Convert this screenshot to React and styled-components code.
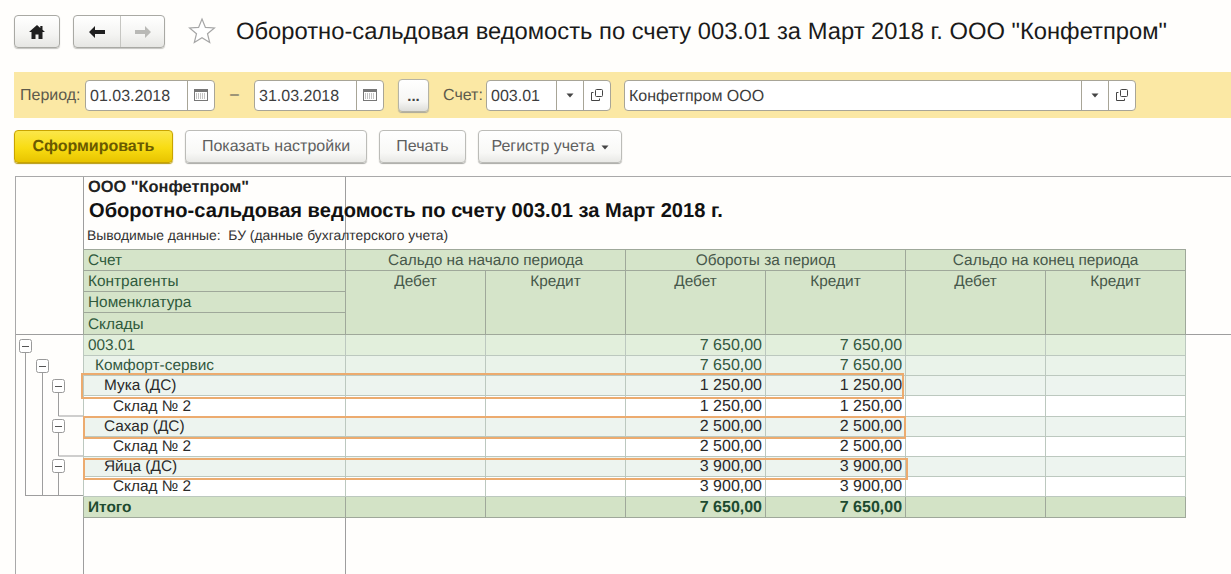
import React from "react";
import styled, { createGlobalStyle } from "styled-components";

const GlobalStyle = createGlobalStyle`
  html, body {
    margin: 0;
    padding: 0;
    background: #fffefc;
    font-family: "Liberation Sans", Arial, sans-serif;
    color: #2b2b2b;
    text-rendering: geometricPrecision;
  }
  body {
    height: 574px;
    overflow: hidden;
  }
`;

const Page = styled.div`
  display: flex;
  flex-direction: column;
  width: 1231px;
  height: 574px;
  overflow: hidden;
`;

const TopBar = styled.div`
  display: flex;
  align-items: flex-start;
  height: 57px;
  padding: 15px 0 0 14px;
`;

const NavGroup = styled.div`
  display: flex;
  height: 33px;
  margin-right: 13px;
  border: 1px solid #a9a9a4;
  border-radius: 4px;
  background: linear-gradient(#ffffff, #f4f4f2 60%, #e6e6e3);
  box-sizing: border-box;
  box-shadow: 0 1px 1px #c4c4c0;
`;

const NavButton = styled.div`
  display: flex;
  align-items: center;
  justify-content: center;
  width: ${(p) => p.$width}px;
  & + & {
    border-left: 1px solid #c6c6c2;
  }
`;

const StarWrap = styled.div`
  display: flex;
  margin: 2px 20px 0 10px;
`;

const PageTitle = styled.h1`
  margin: 2px 0 0;
  font-size: 23.75px;
  font-weight: 400;
  line-height: 30px;
  color: #1a1a1a;
  white-space: nowrap;
`;

const FilterBar = styled.div`
  display: flex;
  align-items: center;
  height: 46px;
  margin-left: 14px;
  padding-left: 6px;
  background: #fbe8a4;
`;

const FilterLabel = styled.span`
  width: ${(p) => p.$width}px;
  padding-top: 1px;
  font-size: 16px;
  color: #5d5a4c;
`;

const Dash = styled.span`
  width: 39px;
  text-align: center;
  font-size: 16px;
  color: #555;
`;

const Field = styled.div`
  display: flex;
  align-items: stretch;
  flex: none;
  width: ${(p) => p.$width}px;
  height: 31px;
  margin-right: ${(p) => p.$gap}px;
  border: 1px solid #a8a597;
  border-radius: 4px;
  background: #fff;
  box-sizing: border-box;
`;

const FieldText = styled.span`
  flex: 1;
  padding: 1px 0 0 4px;
  font-size: 16px;
  line-height: 29px;
  color: #3d3d3d;
`;

const FieldButton = styled.span`
  display: flex;
  align-items: center;
  justify-content: center;
  width: 26px;
  border-left: 1px solid #a8a597;
`;

const DotsButton = styled.div`
  flex: none;
  width: 31px;
  height: 33px;
  margin-right: 14px;
  border: 1px solid #b5b3a5;
  border-radius: 4px;
  background: linear-gradient(#ffffff, #f6f6f4 70%, #dededa);
  box-sizing: border-box;
  box-shadow: 0 1px 1px #aaa89c;
  text-align: center;
  font-size: 15px;
  font-weight: 700;
  line-height: 34px;
  color: #444;
`;

const ActionBar = styled.div`
  display: flex;
  gap: 12px;
  height: 33px;
  margin-top: 12px;
  padding-left: 14px;
`;

const ActionButton = styled.div`
  display: flex;
  align-items: center;
  justify-content: center;
  gap: 6px;
  width: ${(p) => p.$width}px;
  padding-top: 1px;
  border: 1px solid ${(p) => (p.$primary ? "#c9a400" : "#bcbcb8")};
  border-radius: 4px;
  background: ${(p) =>
    p.$primary
      ? "linear-gradient(#fbe74a, #f8dc12 55%, #e8c400)"
      : "linear-gradient(#ffffff, #f8f8f6 70%, #e9e9e6)"};
  box-sizing: border-box;
  box-shadow: 0 1px 1px ${(p) => (p.$primary ? "#b59a10" : "#a9a9a5")};
  font-size: 16px;
  font-weight: ${(p) => (p.$primary ? 700 : 400)};
  color: ${(p) => (p.$primary ? "#6a5a00" : "#5f5f5f")};
`;

const Sheet = styled.div`
  position: relative;
  display: flex;
  flex: 1;
  margin: 13px 0 0 15px;
  border-top: 1px solid #a9a9a9;
  border-left: 1px solid #a9a9a9;
  /* a rule that runs on past the table, under the header */
  background: linear-gradient(#9e9e9e, #9e9e9e) no-repeat 0 157px / 100% 1px;
`;

const Gutter = styled.div`
  flex: none;
  width: 67px;
  border-right: 1px solid #9e9e9e;
`;

const TreeLines = styled.svg`
  display: block;
  margin-top: 157px;
`;

const ReportArea = styled.div`
  flex: 1;
  background: linear-gradient(#9e9e9e, #9e9e9e) no-repeat 261px 0 / 1px 100%;
`;

const ReportHead = styled.div`
  height: 72px;
  padding-left: 4px;
  box-sizing: border-box;
`;

const Company = styled.div`
  padding-top: 2px;
  font-size: 16.4px;
  font-weight: 700;
  line-height: 17px;
  color: #222;
`;

const ReportTitle = styled.div`
  margin-top: 3px;
  padding-left: 1px;
  font-size: 20.1px;
  font-weight: 700;
  line-height: 24px;
  color: #111;
  white-space: nowrap;
`;

const ReportNote = styled.div`
  margin: 5px 0 0 -1px;
  font-size: 13.9px;
  line-height: 15px;
  color: #333;
  white-space: nowrap;
`;

const Table = styled.table`
  width: 1102px;
  margin-left: -1px;
  border-collapse: collapse;
  table-layout: fixed;
  font-size: 15.4px;
`;

const HeadCell = styled.td`
  height: ${(p) => p.$height || 20}px;
  padding: ${(p) => (p.$top ? 2 : 1)}px 3px 0 ${(p) => (p.$left ? 4 : 3)}px;
  border: 1px solid #9fa89a;
  background: #d5e4c9;
  box-sizing: border-box;
  color: ${(p) => (p.$left ? "#2f5a3c" : "#46574a")};
  line-height: 17px;
  text-align: ${(p) => (p.$left ? "left" : "center")};
  vertical-align: ${(p) => (p.$top ? "top" : "middle")};
  white-space: nowrap;
  overflow: hidden;
`;

const rowColors = {
  account: "#e2efdc",
  partner: "#eaf3ea",
  item: "#edf4ef",
  store: "#ffffff",
  total: "#d3e3c6",
};

const BodyCell = styled.td`
  height: ${(p) => p.$height}px;
  padding: 0 3px 0 ${(p) => p.$indent || 3}px;
  border: 1px solid ${(p) => (p.$kind === "total" ? "#9fa89a" : "#bcc8bf")};
  background: ${(p) => rowColors[p.$kind]};
  box-sizing: border-box;
  color: ${(p) => (p.$kind === "total" ? "#1d4a30" : p.$kind === "account" || p.$kind === "partner" ? "#33583f" : "#2a2a2a")};
  font-size: ${(p) => (p.$num ? "16px" : "inherit")};
  font-weight: ${(p) => (p.$kind === "total" ? 700 : 400)};
  line-height: 17px;
  text-align: ${(p) => (p.$num ? "right" : "left")};
  white-space: nowrap;
  overflow: hidden;
`;

const Highlight = styled.div`
  position: absolute;
  left: ${(p) => p.$left}px;
  top: ${(p) => p.$top}px;
  width: ${(p) => p.$width}px;
  height: ${(p) => p.$height}px;
  border: 2px solid #ecab6f;
  box-sizing: border-box;
  pointer-events: none;
`;

const HomeIcon = () => (
  <svg width="18" height="16" viewBox="0 0 18 16">
    <path d="M9 1 1 8h2.5v7h4v-4.5h3V15h4V8H17l-2.5-2.2V2h-2.2v1.900z" fill="#1f1f1f" />
  </svg>
);

const ArrowIcon = ({ color, flip }) => (
  <svg width="20" height="14" viewBox="0 0 20 14" style={flip ? { transform: "scaleX(-1)" } : undefined}>
    <path d="M8 1 2 7l6 6v-4h10V5H8z" fill={color} />
  </svg>
);

const StarIcon = () => (
  <svg width="28" height="28" viewBox="0 0 28 28">
    <path
      d="M14 2l3.400 8.400 9 .6-6.900 5.700 2.200 8.800L14 20.700l-7.700 4.800 2.200-8.800L1.600 11l9-.6z"
      fill="#fff"
      stroke="#a6a6a6"
      strokeWidth="1.2"
    />
  </svg>
);

const CalendarIcon = () => (
  <svg width="14" height="12" viewBox="0 0 14 12">
    <rect x="0.5" y="0.5" width="13" height="11" fill="#fff" stroke="#777" />
    <rect x="1" y="1" width="12" height="2" fill="#777" />
    <path d="M2 5h10M2 7h10M2 9h10" stroke="#888" strokeDasharray="1 1" />
  </svg>
);

const CaretIcon = () => (
  <svg width="8" height="5" viewBox="0 0 8 5">
    <path d="M0.5 0.5h7L4 4.500z" fill="#444" />
  </svg>
);

const OpenIcon = () => (
  <svg width="14" height="14" viewBox="0 0 14 14">
    <rect x="5.5" y="1.5" width="7" height="7" rx="1" fill="#fff" stroke="#444" />
    <path d="M3.5 4.500h-2v8h8v-2" fill="none" stroke="#444" />
  </svg>
);

const accounts = [
  { key: "root", kind: "account", label: "003.01", indent: 4, value: "7 650,00", height: 21 },
  { key: "partner", kind: "partner", label: "Комфорт-сервис", indent: 11, value: "7 650,00", height: 20 },
  { key: "flour", kind: "item", label: "Мука (ДС)", indent: 20, value: "1 250,00", height: 20 },
  { key: "flour-store", kind: "store", label: "Склад № 2", indent: 29, value: "1 250,00", height: 21 },
  { key: "sugar", kind: "item", label: "Сахар (ДС)", indent: 20, value: "2 500,00", height: 20 },
  { key: "sugar-store", kind: "store", label: "Склад № 2", indent: 29, value: "2 500,00", height: 20 },
  { key: "eggs", kind: "item", label: "Яйца (ДС)", indent: 20, value: "3 900,00", height: 20 },
  { key: "eggs-store", kind: "store", label: "Склад № 2", indent: 29, value: "3 900,00", height: 20 },
  { key: "total", kind: "total", label: "Итого", indent: 4, value: "7 650,00", height: 21 },
];

const treeBoxes = [
  [9, 12],
  [26, 32],
  [42, 52],
  [42, 92],
  [42, 132],
];

const Tree = () => (
  <TreeLines width="67" height="180" viewBox="0 0 67 180">
    <path
      d="M9.5 12v150M26.5 32v130M42.5 52v30H67M42.5 92v30H67M42.5 132v30M9 161.5h58"
      fill="none"
      stroke="#9e9e9e"
    />
    {treeBoxes.map(([x, y]) => (
      <g key={y}>
        <rect x={x - 5.5} y={y - 6.5} width="12" height="13" rx="2" fill="#fff" stroke="#9a9a9a" />
        <path d={`M${x - 3} ${y + 0.5}h7`} stroke="#555" />
      </g>
    ))}
  </TreeLines>
);

export default function App() {
  return (
    <Page>
      <GlobalStyle />
      <TopBar>
        <NavGroup>
          <NavButton $width={44}>
            <HomeIcon />
          </NavButton>
        </NavGroup>
        <NavGroup>
          <NavButton $width={46}>
            <ArrowIcon color="#1f1f1f" />
          </NavButton>
          <NavButton $width={43}>
            <ArrowIcon color="#b9b9b6" flip />
          </NavButton>
        </NavGroup>
        <StarWrap>
          <StarIcon />
        </StarWrap>
        <PageTitle>Оборотно-сальдовая ведомость по счету 003.01 за Март 2018 г. ООО "Конфетпром"</PageTitle>
      </TopBar>

      <FilterBar>
        <FilterLabel $width={65}>Период:</FilterLabel>
        <Field $width={130} $gap={0}>
          <FieldText>01.03.2018</FieldText>
          <FieldButton>
            <CalendarIcon />
          </FieldButton>
        </Field>
        <Dash>–</Dash>
        <Field $width={130} $gap={14}>
          <FieldText>31.03.2018</FieldText>
          <FieldButton>
            <CalendarIcon />
          </FieldButton>
        </Field>
        <DotsButton>...</DotsButton>
        <FilterLabel $width={43}>Счет:</FilterLabel>
        <Field $width={125} $gap={13}>
          <FieldText>003.01</FieldText>
          <FieldButton>
            <CaretIcon />
          </FieldButton>
          <FieldButton>
            <OpenIcon />
          </FieldButton>
        </Field>
        <Field $width={512} $gap={0}>
          <FieldText>Конфетпром ООО</FieldText>
          <FieldButton>
            <CaretIcon />
          </FieldButton>
          <FieldButton>
            <OpenIcon />
          </FieldButton>
        </Field>
      </FilterBar>

      <ActionBar>
        <ActionButton $primary $width={159}>Сформировать</ActionButton>
        <ActionButton $width={182}>Показать настройки</ActionButton>
        <ActionButton $width={87}>Печать</ActionButton>
        <ActionButton $width={144}>
          Регистр учета <CaretIcon />
        </ActionButton>
      </ActionBar>

      <Sheet>
        <Gutter>
          <Tree />
        </Gutter>
        <ReportArea>
          <ReportHead>
            <Company>ООО "Конфетпром"</Company>
            <ReportTitle>Оборотно-сальдовая ведомость по счету 003.01 за Март 2018 г.</ReportTitle>
            <ReportNote>Выводимые данные:&nbsp; БУ (данные бухгалтерского учета)</ReportNote>
          </ReportHead>
          <Table>
            <colgroup>
              <col width="262" />
              <col width="140" />
              <col width="140" />
              <col width="140" />
              <col width="140" />
              <col width="140" />
              <col width="140" />
            </colgroup>
            <tbody>
              <tr>
                <HeadCell $left $height={21}>Счет</HeadCell>
                <HeadCell colSpan={2}>Сальдо на начало периода</HeadCell>
                <HeadCell colSpan={2}>Обороты за период</HeadCell>
                <HeadCell colSpan={2}>Сальдо на конец периода</HeadCell>
              </tr>
              <tr>
                <HeadCell $left $height={21}>Контрагенты</HeadCell>
                {["d1", "c1", "d2", "c2", "d3", "c3"].map((id) => (
                  <HeadCell key={id} rowSpan={3} $top>
                    {id[0] === "d" ? "Дебет" : "Кредит"}
                  </HeadCell>
                ))}
              </tr>
              <tr>
                <HeadCell $left $height={21}>Номенклатура</HeadCell>
              </tr>
              <tr>
                <HeadCell $left $height={22}>Склады</HeadCell>
              </tr>
              {accounts.map((row) => (
                <tr key={row.key}>
                  <BodyCell $kind={row.kind} $height={row.height} $indent={row.indent}>{row.label}</BodyCell>
                  <BodyCell $kind={row.kind} />
                  <BodyCell $kind={row.kind} />
                  <BodyCell $kind={row.kind} $num>{row.value}</BodyCell>
                  <BodyCell $kind={row.kind} $num>{row.value}</BodyCell>
                  <BodyCell $kind={row.kind} />
                  <BodyCell $kind={row.kind} />
                </tr>
              ))}
            </tbody>
          </Table>
        </ReportArea>
        <Highlight $left={65} $top={196} $width={823} $height={26} />
        <Highlight $left={67} $top={239} $width={823} $height={23} />
        <Highlight $left={67} $top={281} $width={825} $height={22} />
      </Sheet>
    </Page>
  );
}
